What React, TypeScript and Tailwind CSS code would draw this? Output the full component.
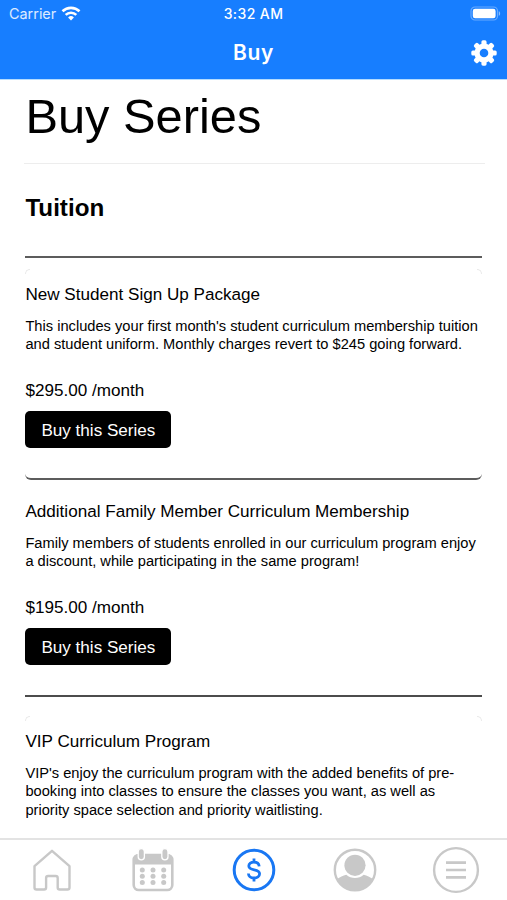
import React from "react";

interface Series {
  name: string;
  lines: string[];
  price?: string;
}

const newStudent: Series = {
  name: "New Student Sign Up Package",
  lines: [
    "This includes your first month's student curriculum membership tuition",
    "and student uniform. Monthly charges revert to $245 going forward.",
  ],
  price: "$295.00 /month",
};

const additional: Series = {
  name: "Additional Family Member Curriculum Membership",
  lines: [
    "Family members of students enrolled in our curriculum program enjoy",
    "a discount, while participating in the same program!",
  ],
  price: "$195.00 /month",
};

const vip: Series = {
  name: "VIP Curriculum Program",
  lines: [
    "VIP's enjoy the curriculum program with the added benefits of pre-",
    "booking into classes to ensure the classes you want, as well as",
    "priority space selection and priority waitlisting.",
  ],
};

const WifiIcon = () => (
  <svg viewBox="0 0 20 15" className="h-[15px] w-5" fill="none" stroke="white" strokeWidth="2.6">
    <path d="M1.5 5.3a12.2 12.2 0 0 1 17 0" />
    <path d="M4.7 8.9a7.6 7.6 0 0 1 10.6 0" />
    <path d="M10 14.4 7.1 11.5a4.1 4.1 0 0 1 5.8 0z" fill="white" stroke="none" />
  </svg>
);

const BatteryIcon = () => (
  <svg viewBox="0 0 31 15" className="h-[15px] w-[31px]">
    <rect x="1" y="1" width="26.5" height="13" rx="4" fill="none" stroke="white" strokeOpacity=".35" strokeWidth="1.2" />
    <rect x="2.8" y="2.8" width="22.8" height="9.4" rx="2.3" fill="white" />
    <path d="M28.8 5.2c1.8.6 1.8 4 0 4.6z" fill="white" fillOpacity=".5" />
  </svg>
);

const GearIcon = () => (
  <svg viewBox="-13 -13 26 26" className="h-[26px] w-[26px]" fill="white">
    <mask id="hub" maskUnits="userSpaceOnUse" x="-13" y="-13" width="26" height="26">
      <rect x="-13" y="-13" width="26" height="26" fill="white" />
      <circle r="4.3" fill="black" />
    </mask>
    <g mask="url(#hub)">
      <circle r="9.6" />
      {[0, 45, 90, 135].map((angle) => (
        <rect key={angle} x="-2.6" y="-12.7" width="5.2" height="25.4" rx="1.6" transform={`rotate(${angle})`} />
      ))}
    </g>
  </svg>
);

const HomeIcon = () => (
  <svg viewBox="0 0 48 48" className="h-12 w-12" fill="none" stroke="#c8c8c8" strokeWidth="2.4" strokeLinejoin="round">
    <path d="M24 4.8 6.5 20.2V41.5q0 2 2 2h7.6q2 0 2-2V32q0-2 2-2h7.6q2 0 2 2v9.5q0 2 2 2h7.8q2 0 2-2V20.2z" />
  </svg>
);

const CalendarIcon = () => (
  <svg viewBox="0 0 48 48" className="h-12 w-12">
    <rect x="4.7" y="9" width="38.6" height="35" rx="5" fill="none" stroke="#c8c8c8" strokeWidth="2.6" />
    <path d="M4 18.5v-4.5q0-5.5 5.5-5.5h29q5.5 0 5.5 5.5v4.5z" fill="#c8c8c8" />
    {[12.3, 35.9].map((x) => (
      <rect key={x} x={x - 3.1} y="2.6" width="6.2" height="11.2" rx="3.1" fill="#c8c8c8" stroke="white" strokeWidth="1.3" />
    ))}
    {[24.1, 30.2, 36.5].map((y) =>
      [13.3, 24, 34.7].map((x) => (
        <circle key={`${x}-${y}`} cx={x} cy={y} r="2.5" fill="#c8c8c8" />
      ))
    )}
  </svg>
);

const DollarIcon = () => (
  <svg viewBox="0 0 48 48" className="h-12 w-12" fill="none" stroke="#1977f3">
    <circle cx="24" cy="24" r="19.8" strokeWidth="3" />
    <path
      d="M29.2 20.3c-.3-2.7-2.4-4.1-5.2-4.1-3 0-5.2 1.5-5.2 3.9 0 5.4 10.8 2.3 10.8 7.7 0 2.6-2.4 4.2-5.5 4.2-3.3 0-5.5-1.7-5.7-4.5M24 12.5V16M24 32v3.5"
      strokeWidth="2.8"
    />
  </svg>
);

const ProfileIcon = () => (
  <svg viewBox="0 0 48 48" className="h-12 w-12" fill="#c8c8c8">
    <circle cx="24" cy="24" r="20.2" fill="none" stroke="#c8c8c8" strokeWidth="2.4" />
    <circle cx="24" cy="19.3" r="10.6" />
    <path d="M6 33c2.8-2 6-3.3 9.3-4.3 5 4.3 12.4 4.3 17.4 0 3.3 1 6.5 2.3 9.3 4.3-3.2 7-10.2 12-18 12S9.2 40 6 33z" />
  </svg>
);

const MenuIcon = () => (
  <svg viewBox="0 0 48 48" className="h-12 w-12" fill="none" stroke="#c8c8c8">
    <circle cx="24" cy="24" r="21.9" strokeWidth="2.4" />
    <path d="M14 16.6h20M14 24h20M14 31.4h20" strokeWidth="2.6" />
  </svg>
);

const SeriesDetails = ({ series }: { series: Series }) => (
  <div className="text-[17.1px] leading-5">
    <h3 className="whitespace-nowrap">{series.name}</h3>
    <p className="mt-[12px] text-[14.66px] leading-[18.3px] whitespace-nowrap">
      {series.lines.map((line) => (
        <span key={line} className="block">
          {line}
        </span>
      ))}
    </p>
    {series.price && (
      <>
        <p className="mt-[27.4px]">{series.price}</p>
        <button className="mt-[10px] flex h-[37px] w-[146px] items-center justify-center rounded-[5px] bg-black pt-[3px] text-[17.1px] text-white">
          Buy this Series
        </button>
      </>
    )}
  </div>
);

/* Faint rounded top edge of a card, only visible at its corners */
const CardCorners = () => (
  <div className="flex h-[5px] justify-between">
    <div className="h-[5px] w-[5px] rounded-tl-[5px] border-t border-l border-[#e9e9e9]" />
    <div className="h-[5px] w-[5px] rounded-tr-[5px] border-t border-r border-[#e9e9e9]" />
  </div>
);

export default function App() {
  return (
    <div className="flex h-[900px] w-[507px] flex-col overflow-hidden bg-white font-['Liberation_Sans',Arial,sans-serif] text-black">
      <header className="h-[79px] shrink-0 bg-[#177eff] font-[Inter,sans-serif] text-white">
        <div className="grid h-[27px] grid-cols-3 items-center pr-[6px] pl-[9px] text-[14px]">
          <div className="flex items-center gap-[5px]">
            <span className="text-[14.4px] text-white/85">Carrier</span>
            <WifiIcon />
          </div>
          <span className="-ml-[3px] text-center font-medium tracking-[0.4px]">3:32 AM</span>
          <div className="flex justify-end">
            <BatteryIcon />
          </div>
        </div>
        <div className="grid h-[51px] grid-cols-3 items-center pr-[10.5px] pl-[10.5px]">
          <h1 className="col-start-2 text-center text-[21px] font-semibold tracking-[0.7px]">Buy</h1>
          <div className="flex justify-end">
            <GearIcon />
          </div>
        </div>
      </header>

      <main className="flex-1 overflow-hidden border-t border-[#b5dcff] pr-[22px] pl-[25.4px]">
        <h2 className="-ml-[1.4px] h-[84px] border-b border-[#ededed] pl-[1.4px] text-[48.8px] leading-[73px]">Buy Series</h2>
        <h2 className="mt-[29px] text-[24.2px] leading-[30px] font-bold">Tuition</h2>

        <section className="mt-[33px] mr-[2.6px] border-t-2 border-[#5c5c5c] pt-[11px]">
          <CardCorners />
          <div className="pt-[11px]">
            <SeriesDetails series={newStudent} />
          </div>
          <div className="mt-[26px] h-[6px] rounded-b-[6px] border-b-2 border-[#5c5c5c]" />
        </section>

        <section className="mr-[2.6px] pt-[22px]">
          <SeriesDetails series={additional} />
        </section>

        <section className="mt-[30px] mr-[2.6px] border-t-2 border-[#4c4c4c] pt-[19px]">
          <CardCorners />
          <div className="pt-[11px]">
            <SeriesDetails series={vip} />
          </div>
        </section>
      </main>

      <nav className="flex h-[62px] shrink-0 justify-around border-t-2 border-[#e3e3e3] bg-white pt-[6px] pl-px">
        <HomeIcon />
        <CalendarIcon />
        <DollarIcon />
        <ProfileIcon />
        <MenuIcon />
      </nav>
    </div>
  );
}
